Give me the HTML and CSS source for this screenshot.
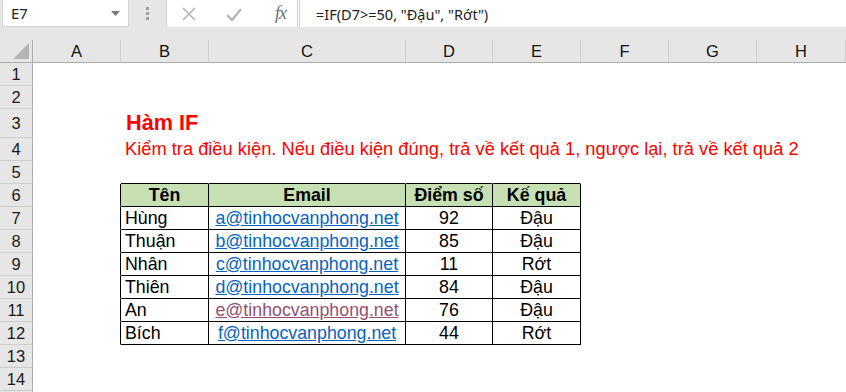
FILE: index.html
```html
<!DOCTYPE html>
<html lang="vi">
<head>
<meta charset="utf-8">
<link rel="stylesheet" href="styles.css">
</head>
<body>
<div class="app">
  <div class="topbar">
    <div class="namebox">
      <span class="ref">E7</span>
      <svg class="caret" width="9" height="5" viewBox="0 0 9 5"><path d="M0 0h9L4.5 5z" fill="#7a7a7a"/></svg>
    </div>
    <div class="grip"><i></i><i></i><i></i></div>
    <div class="fxbox">
      <div class="icons">
        <svg class="ic" width="16" height="16" viewBox="0 0 16 16"><path d="M2 2L14 14M14 2L2 14" stroke="#b3b3b3" stroke-width="1.6" fill="none"/></svg>
        <svg class="ic" width="18" height="16" viewBox="0 0 18 16"><path d="M2 9L7 14L16 3" stroke="#b3b3b3" stroke-width="2.2" fill="none"/></svg>
        <span class="fx">fx</span>
      </div>
      <div class="formula">=IF(D7&gt;=50, "Đậu", "Rớt")</div>
    </div>
  </div>
  <div class="sheet">
    <div class="row colhead">
      <div class="rh corner"><svg width="16" height="16" viewBox="0 0 16 16"><path d="M16 0V16H0z" fill="#b4b4b4"/></svg></div>
      <div class="ch ca">A</div><div class="ch cb">B</div><div class="ch cc">C</div><div class="ch cd">D</div><div class="ch ce">E</div><div class="ch cf">F</div><div class="ch cg">G</div><div class="ch chh">H</div>
    </div>
    <div class="row"><div class="rh">1</div><div class="c ca"></div><div class="c cb"></div><div class="c cc"></div><div class="c cd"></div><div class="c ce"></div><div class="c cf"></div><div class="c cg"></div><div class="c chh"></div></div>
    <div class="row"><div class="rh">2</div><div class="c ca"></div><div class="c cb"></div><div class="c cc"></div><div class="c cd"></div><div class="c ce"></div><div class="c cf"></div><div class="c cg"></div><div class="c chh"></div></div>
    <div class="row tall"><div class="rh">3</div><div class="c ca"></div><div class="c cb"><span class="title">Hàm IF</span></div><div class="c cc"></div><div class="c cd"></div><div class="c ce"></div><div class="c cf"></div><div class="c cg"></div><div class="c chh"></div></div>
    <div class="row"><div class="rh">4</div><div class="c ca"></div><div class="c cb"><span class="sub">Kiểm tra điều kiện. Nếu điều kiện đúng, trả về kết quả 1, ngược lại, trả về kết quả 2</span></div><div class="c cc"></div><div class="c cd"></div><div class="c ce"></div><div class="c cf"></div><div class="c cg"></div><div class="c chh"></div></div>
    <div class="row"><div class="rh">5</div><div class="c ca"></div><div class="c cb bb"></div><div class="c cc bb"></div><div class="c cd bb"></div><div class="c ce bb"></div><div class="c cf"></div><div class="c cg"></div><div class="c chh"></div></div>
    <div class="row"><div class="rh">6</div><div class="c ca br"></div><div class="c cb t th">Tên</div><div class="c cc t th">Email</div><div class="c cd t th">Điểm số</div><div class="c ce t th">Kế quả</div><div class="c cf"></div><div class="c cg"></div><div class="c chh"></div></div>
    <div class="row"><div class="rh">7</div><div class="c ca br"></div><div class="c cb t">Hùng</div><div class="c cc t mid"><a class="link">a@tinhocvanphong.net</a></div><div class="c cd t mid">92</div><div class="c ce t mid">Đậu</div><div class="c cf"></div><div class="c cg"></div><div class="c chh"></div></div>
    <div class="row"><div class="rh">8</div><div class="c ca br"></div><div class="c cb t">Thuận</div><div class="c cc t mid"><a class="link">b@tinhocvanphong.net</a></div><div class="c cd t mid">85</div><div class="c ce t mid">Đậu</div><div class="c cf"></div><div class="c cg"></div><div class="c chh"></div></div>
    <div class="row"><div class="rh">9</div><div class="c ca br"></div><div class="c cb t">Nhân</div><div class="c cc t mid"><a class="link">c@tinhocvanphong.net</a></div><div class="c cd t mid">11</div><div class="c ce t mid">Rớt</div><div class="c cf"></div><div class="c cg"></div><div class="c chh"></div></div>
    <div class="row"><div class="rh">10</div><div class="c ca br"></div><div class="c cb t">Thiên</div><div class="c cc t mid"><a class="link">d@tinhocvanphong.net</a></div><div class="c cd t mid">84</div><div class="c ce t mid">Đậu</div><div class="c cf"></div><div class="c cg"></div><div class="c chh"></div></div>
    <div class="row"><div class="rh">11</div><div class="c ca br"></div><div class="c cb t">An</div><div class="c cc t mid"><a class="link visited">e@tinhocvanphong.net</a></div><div class="c cd t mid">76</div><div class="c ce t mid">Đậu</div><div class="c cf"></div><div class="c cg"></div><div class="c chh"></div></div>
    <div class="row"><div class="rh">12</div><div class="c ca br"></div><div class="c cb t">Bích</div><div class="c cc t mid"><a class="link">f@tinhocvanphong.net</a></div><div class="c cd t mid">44</div><div class="c ce t mid">Rớt</div><div class="c cf"></div><div class="c cg"></div><div class="c chh"></div></div>
    <div class="row"><div class="rh">13</div><div class="c ca"></div><div class="c cb"></div><div class="c cc"></div><div class="c cd"></div><div class="c ce"></div><div class="c cf"></div><div class="c cg"></div><div class="c chh"></div></div>
    <div class="row"><div class="rh">14</div><div class="c ca"></div><div class="c cb"></div><div class="c cc"></div><div class="c cd"></div><div class="c ce"></div><div class="c cf"></div><div class="c cg"></div><div class="c chh"></div></div>
    <div class="row"><div class="rh"></div><div class="c ca"></div><div class="c cb"></div><div class="c cc"></div><div class="c cd"></div><div class="c ce"></div><div class="c cf"></div><div class="c cg"></div><div class="c chh"></div></div>
  </div>
</div>
</body>
</html>
```

FILE: styles.css
```css
* { box-sizing: border-box; }
html, body { margin: 0; padding: 0; background: #fff; }
body { width: 846px; height: 392px; overflow: hidden; font-family: "Liberation Sans", Arial, sans-serif; color: #000; }

.app { width: 846px; }

.topbar {
  height: 40px;
  background: #e6e6e6;
  display: flex;
  align-items: flex-start;
}
.namebox {
  margin-left: 2px;
  width: 127px;
  height: 27px;
  background: #fff;
  border: 1px solid #d4d4d4;
  border-top: none;
  display: flex;
  align-items: center;
  justify-content: space-between;
  padding: 0 8px 0 8px;
}
.ref { font-family: "Noto Sans", "Open Sans", sans-serif; font-size: 15px; color: #222; }
.grip {
  width: 37px;
  height: 27px;
  display: flex;
  flex-direction: column;
  align-items: center;
  justify-content: center;
  gap: 2px;
}
.grip i { display: block; width: 3px; height: 3px; background: #a0a0a0; }
.fxbox {
  flex: 1;
  height: 27px;
  background: #fff;
  border-left: 1px solid #d4d4d4;
  display: flex;
}
.icons {
  width: 133px;
  display: flex;
  align-items: center;
  padding-left: 14px;
  gap: 28px;
  border-right: 3px double #d0d0d0;
}
.icons .ic { display: block; }
.fx { font-family: "Liberation Serif", serif; font-style: italic; font-size: 18px; color: #707070; margin-left: 4px; letter-spacing: -1px; }
.formula {
  padding-left: 16px;
  display: flex;
  align-items: center;
  font-family: "Noto Sans", "Open Sans", sans-serif;
  font-size: 14.5px;
  color: #222;
}

.sheet { display: flex; flex-direction: column; }
.row { display: flex; height: 23px; }
.row.tall { height: 29px; }
.colhead { height: 23px; background: #e6e6e6; }

.rh {
  width: 33px;
  flex: none;
  background: #e6e6e6;
  border-right: 1px solid #ababab;
  border-bottom: 1px solid #cdcdcd;
  display: flex;
  align-items: center;
  justify-content: center;
  font-size: 16.5px;
  color: #1a1a1a;
}
.corner { border-bottom: 1px solid #ababab; align-items: flex-end; justify-content: flex-end; padding: 0 3px 3px 0; }
.corner svg { display: block; }

.ch {
  flex: none;
  background: #e6e6e6;
  border-right: 1px solid #cdcdcd;
  border-bottom: 1px solid #ababab;
  display: flex;
  align-items: center;
  justify-content: center;
  font-size: 16.5px;
  color: #111;
}

.ca { width: 88px; }
.cb { width: 88px; }
.cc { width: 197px; }
.cd { width: 87px; }
.ce { width: 88px; }
.cf { width: 88px; }
.cg { width: 88px; }
.chh { width: 89px; }

.c {
  flex: none;
  border-right: 1px solid transparent;
  border-bottom: 1px solid transparent;
  display: flex;
  align-items: center;
  white-space: nowrap;
  font-size: 17.8px;
  padding-left: 4px;
  overflow: visible;
}
.c.bb { border-bottom-color: #000; }
.c.br { border-right-color: #000; }
.c.t { border-right-color: #000; border-bottom-color: #000; }
.c.th { background: #c6e0b4; font-weight: bold; justify-content: center; padding-left: 0; }
.c.mid { justify-content: center; padding-left: 0; }

.tall .c { align-items: flex-end; padding-bottom: 1px; }
.title { color: #f00; font-weight: bold; font-size: 21.7px; padding-left: 1px; }
.sub { color: #f00; font-size: 18.3px; }

.link { color: #0563c1; text-decoration: underline; }
.link.visited { color: #954f72; }
```
